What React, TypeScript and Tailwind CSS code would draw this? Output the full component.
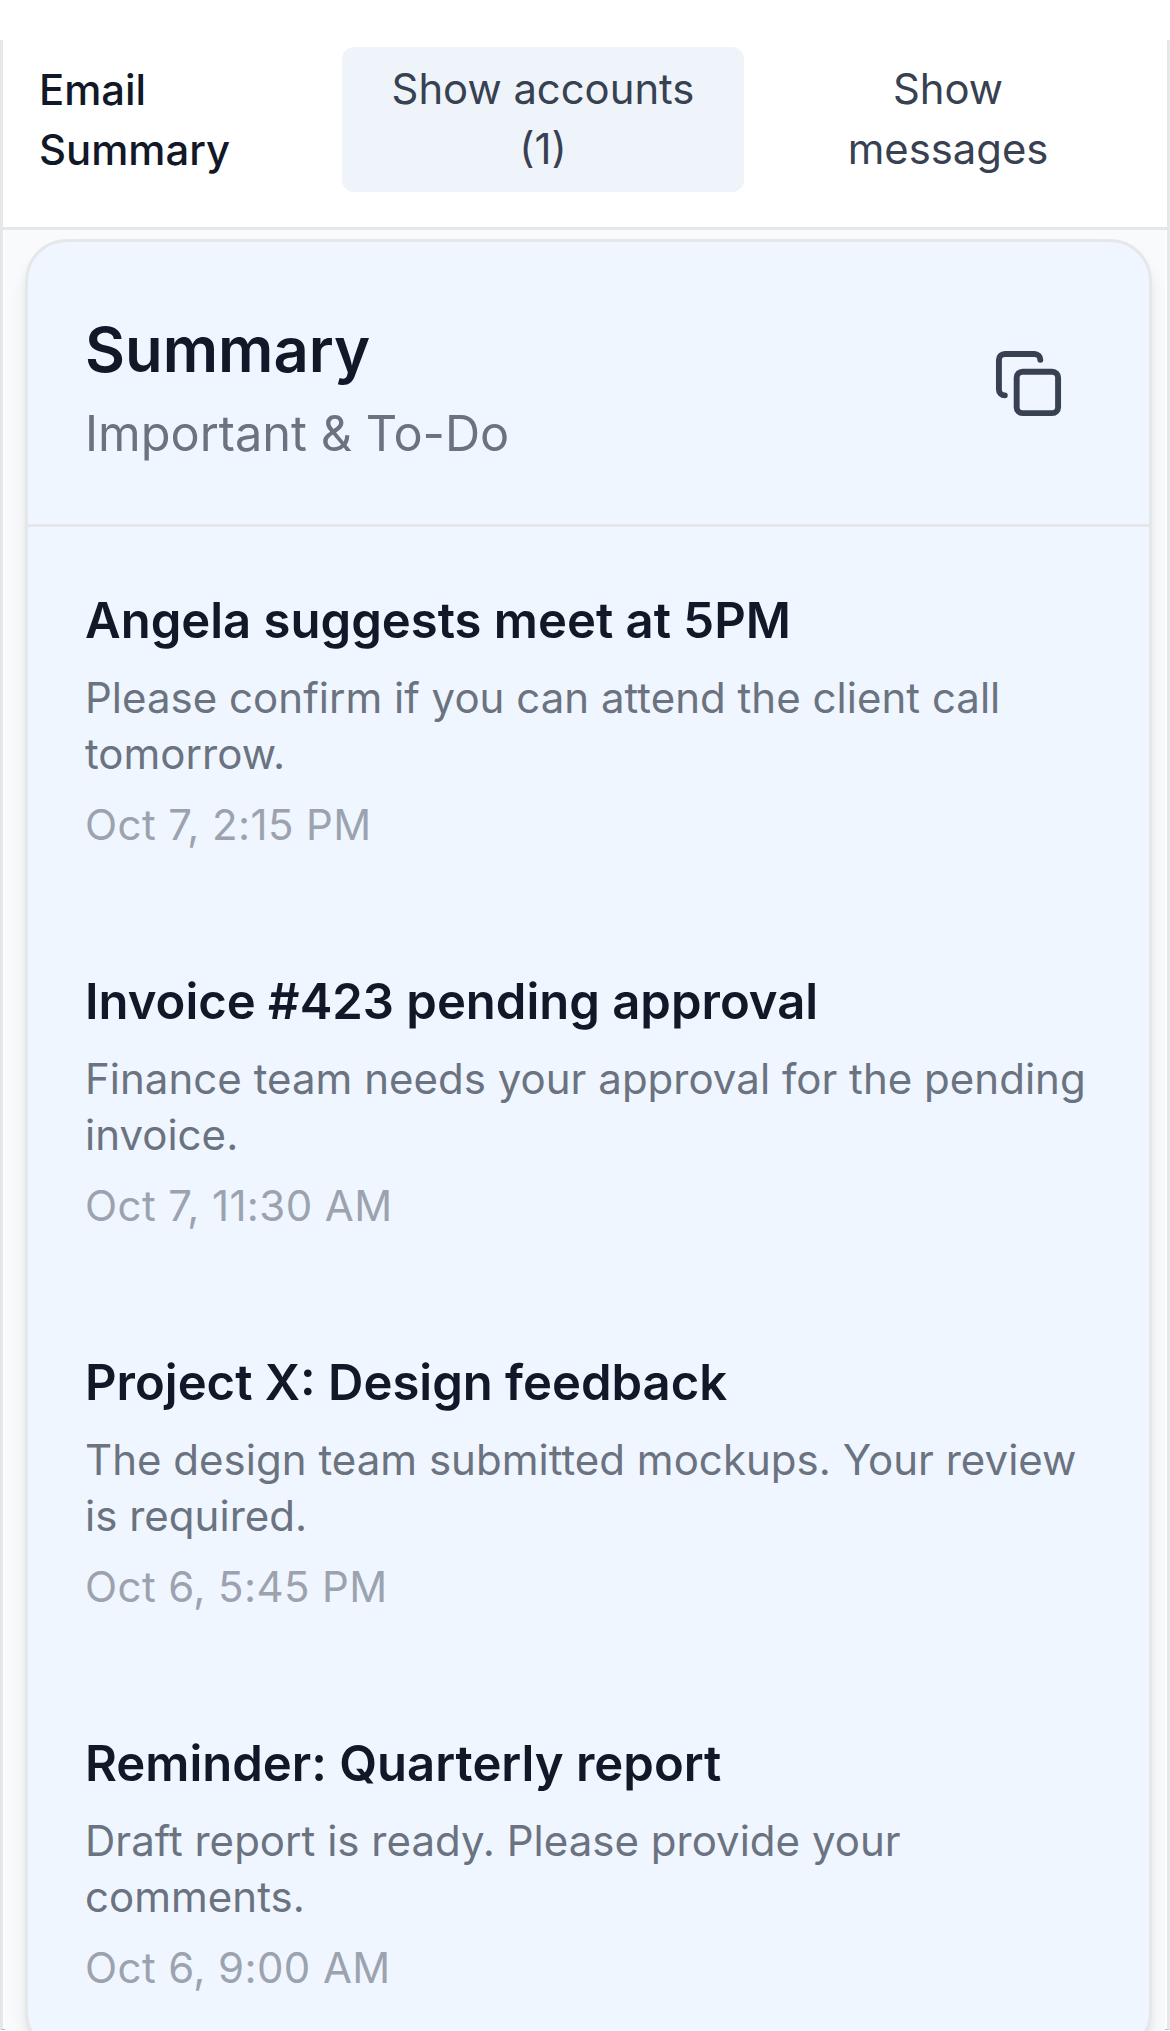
import { Copy } from 'lucide-react';

interface Item { title: string; body: string; time: string; }

const ITEMS: Item[] = [
  { title: 'Angela suggests meet at 5PM', body: 'Please confirm if you can attend the client call tomorrow.', time: 'Oct 7, 2:15 PM' },
  { title: 'Invoice #423 pending approval', body: 'Finance team needs your approval for the pending invoice.', time: 'Oct 7, 11:30 AM' },
  { title: 'Project X: Design feedback', body: 'The design team submitted mockups. Your review is required.', time: 'Oct 6, 5:45 PM' },
  { title: 'Reminder: Quarterly report', body: 'Draft report is ready. Please provide your comments.', time: 'Oct 6, 9:00 AM' },
];

function SummaryItem({ item }: { item: Item }) {
  return (
    <li className="h-[381px] pr-[50px] pl-[57px] pt-[62px]">
      <h3 className="text-[49px] leading-[64px] font-semibold text-[#111827]">{item.title}</h3>
      <p className="mt-[17px] text-[42px] leading-[56px] tracking-[0.02px] text-[#6b7280]">{item.body}</p>
      <p className="mt-[15px] text-[42px] leading-[56px] tracking-[0.4px] text-[#9ca3af]">{item.time}</p>
    </li>
  );
}

export default function App() {
  return (
    <div className="h-[2031px] overflow-hidden bg-white pt-10 font-['Inter',sans-serif]">
      <div className="h-[1990px] border-x-3 border-b border-x-[#e5e7eb] border-b-[#b3b8c2]">
        <header className="flex h-[190px] border-b-3 border-[#e5e7eb] bg-white pt-[7px]">
          <h1 className="w-[339px] pt-[13px] pl-[36px] text-[41.8px] leading-[60px] font-medium text-[#111827]">Email<br />Summary</h1>
          <button className="h-[145px] w-[402px] rounded-[12px] bg-[#eff4fa] pb-px text-[41.8px] leading-[60px] text-[#374151]">Show accounts<br />(1)</button>
          <button className="ml-[3px] h-[145px] w-[402px] pb-px text-[41.8px] leading-[60px] text-[#374151]">Show<br />messages</button>
        </header>
        <main className="mx-0.5 h-[1801px] bg-[#f9fafb] pt-[9px] pr-[13px] pl-5">
          <section className="h-[1815px] rounded-[42px] border-3 border-[#e5e7eb] bg-[#eff6ff] shadow-[0_12px_18px_-3px_rgba(0,0,0,0.1),0_6px_12px_-6px_rgba(0,0,0,0.1)]">
            <div className="flex h-[285px] items-center justify-between border-b-3 border-[#e5e7eb] pr-[85px] pl-[57px]">
              <div className="pt-[17px]">
                <h2 className="text-[61.5px] leading-[84px] font-semibold text-[#111827]">Summary</h2>
                <p className="text-[48.7px] leading-[84px] text-[#6b7280]">Important &amp; To-Do</p>
              </div>
              <Copy className="size-[71px] text-[#374151]" />
            </div>
            <ul>{ITEMS.map(item => <SummaryItem key={item.title} item={item} />)}</ul>
          </section>
        </main>
      </div>
    </div>
  );
}
